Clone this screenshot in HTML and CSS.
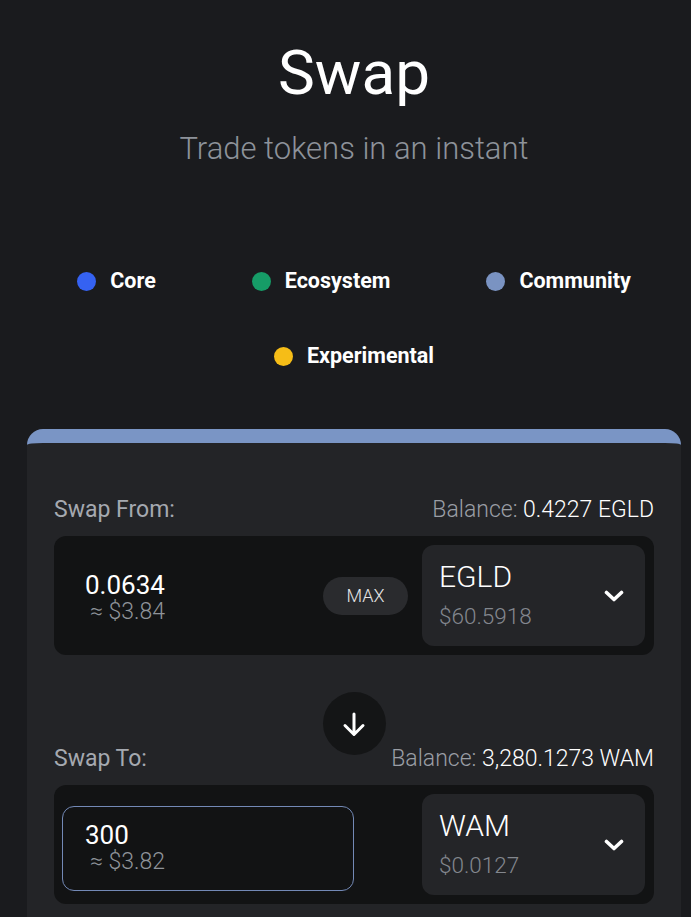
FILE: index.html
```html
<!DOCTYPE html>
<html lang="en">
<head>
    <meta charset="UTF-8">
    <meta name="viewport" content="width=device-width, initial-scale=1.0">
    <title>Swap</title>
    <link rel="stylesheet" href="styles.css">
</head>
<body>
    <div class="page">
        <!-- Header -->
        <header class="intro">
            <h1>Swap</h1>
            <p>Trade tokens in an instant</p>
        </header>

        <!-- Legend -->
        <ul class="legend">
            <li><span class="dot dot-core"></span>Core</li>
            <li><span class="dot dot-eco"></span>Ecosystem</li>
            <li><span class="dot dot-community"></span>Community</li>
            <li><span class="dot dot-exp"></span>Experimental</li>
        </ul>

        <!-- Swap Card -->
        <section class="card">
            <div class="label-row">
                <span class="label">Swap From:</span>
                <span class="balance">Balance: <b>0.4227 EGLD</b></span>
            </div>
            <div class="box">
                <div class="amount amount-plain">
                    <div class="value">0.0634</div>
                    <div class="approx">&asymp; $3.84</div>
                </div>
                <button class="max">MAX</button>
                <div class="token">
                    <div>
                        <div class="token-name">EGLD</div>
                        <div class="token-price">$60.5918</div>
                    </div>
                    <svg class="chevron" width="20" height="12" viewBox="0 0 20 12"><polyline points="2.5,2.5 10,9.5 17.5,2.5" fill="none" stroke="#fff" stroke-width="3.6" stroke-linecap="round" stroke-linejoin="round"/></svg>
                </div>
            </div>

            <div class="switch">
                <svg width="26" height="28" viewBox="0 0 26 28"><path d="M13 4 V24 M4 15.5 L13 24.5 L22 15.5" fill="none" stroke="#fff" stroke-width="3" stroke-linecap="round" stroke-linejoin="round"/></svg>
            </div>

            <div class="label-row label-to">
                <span class="label">Swap To:</span>
                <span class="balance">Balance: <b>3,280.1273 WAM</b></span>
            </div>
            <div class="box">
                <div class="amount amount-field">
                    <div class="value">300</div>
                    <div class="approx">&asymp; $3.82</div>
                </div>
                <div class="token">
                    <div>
                        <div class="token-name">WAM</div>
                        <div class="token-price">$0.0127</div>
                    </div>
                    <svg class="chevron" width="20" height="12" viewBox="0 0 20 12"><polyline points="2.5,2.5 10,9.5 17.5,2.5" fill="none" stroke="#fff" stroke-width="3.6" stroke-linecap="round" stroke-linejoin="round"/></svg>
                </div>
            </div>
        </section>
    </div>
</body>
</html>
```

FILE: styles.css
```css
/* Reset */
* {
    margin: 0;
    padding: 0;
    box-sizing: border-box;
}

body {
    font-family: 'Roboto', 'Liberation Sans', sans-serif;
    background: #1a1b1e;
    color: #fff;
    overflow: hidden;
}

.page {
    padding: 37px 10px 0 27px;
}

/* Header */
.intro {
    text-align: center;
}

.intro h1 {
    font-size: 62px;
    font-weight: 400;
    line-height: 72px;
}

.intro p {
    margin-top: 22px;
    font-size: 31px;
    font-weight: 300;
    line-height: 36px;
    color: #8d929a;
}

/* Legend */
.legend {
    list-style: none;
    display: flex;
    flex-wrap: wrap;
    justify-content: center;
    column-gap: 96px;
    row-gap: 51px;
    margin-top: 102px;
}

.legend li {
    display: flex;
    align-items: center;
    font-size: 21.5px;
    font-weight: 700;
    line-height: 24px;
}

.dot {
    width: 19px;
    height: 19px;
    border-radius: 50%;
    margin-right: 14px;
}

.dot-core { background: #3562f2; }
.dot-eco { background: #169c67; }
.dot-community { background: #7a93c2; }
.dot-exp { background: #f6bd17; }

/* Card */
.card {
    margin-top: 61px;
    background: #232427;
    border-top: 14px solid #7a95c5;
    border-radius: 16px 16px 0 0;
    padding: 54px 27px 40px;
}

.label-row {
    display: flex;
    justify-content: space-between;
    align-items: center;
    font-size: 23px;
    line-height: 26px;
    margin-bottom: 13px;
}

.label {
    color: #a5a9b0;
}

.balance {
    color: #9a9ea5;
    font-weight: 300;
}

.balance b {
    color: #fff;
    font-weight: 300;
}

.box {
    display: flex;
    align-items: center;
    background: #121314;
    border-radius: 12px;
    padding: 9px 9px 9px 8px;
}

.amount {
    display: flex;
    flex-direction: column;
    justify-content: center;
    padding-top: 5px;
}

.amount-plain {
    flex: 1;
    padding-left: 23px;
}

.amount-field {
    width: 292px;
    height: 85px;
    border: 1px solid #7389b6;
    border-radius: 12px;
    padding-top: 0;
    padding-left: 22px;
    margin-top: 7px;
    margin-right: auto;
}

.value {
    font-size: 26px;
    line-height: 25px;
    margin-top: 1px;
}

.approx {
    font-size: 23px;
    line-height: 27px;
    font-weight: 300;
    color: #8f939a;
    padding-left: 5px;
}

.max {
    width: 85px;
    height: 38px;
    border: none;
    border-radius: 19px;
    background: #2a2b2e;
    color: #e6e6e6;
    font-family: inherit;
    font-size: 18px;
    font-weight: 300;
    margin-right: 14px;
}

.token {
    width: 223px;
    height: 101px;
    background: #242528;
    border-radius: 12px;
    display: flex;
    align-items: center;
    justify-content: space-between;
    padding: 0 21px 0 17px;
}

.token-name {
    font-size: 30px;
    font-weight: 300;
    line-height: 32px;
}

.token-price {
    font-size: 22.5px;
    font-weight: 300;
    line-height: 30px;
    color: #83878e;
    margin-top: 8px;
}

/* Switch button */
.switch {
    width: 63px;
    height: 63px;
    margin: 37px auto 0;
    border-radius: 50%;
    background: #141516;
    display: flex;
    align-items: center;
    justify-content: center;
}

.label-to {
    margin-top: -9px;
}
```
